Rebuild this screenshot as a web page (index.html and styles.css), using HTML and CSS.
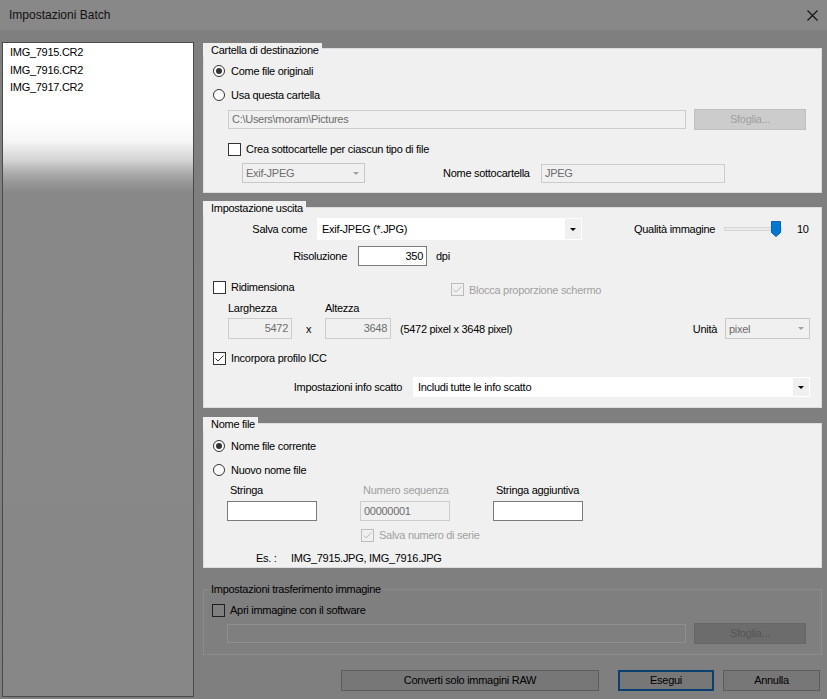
FILE: index.html
```html
<!DOCTYPE html>
<html lang="it">
<head>
<meta charset="utf-8">
<title>Impostazioni Batch</title>
<link rel="stylesheet" href="styles.css">
</head>
<body>
<header class="titlebar">
  <span class="title">Impostazioni Batch</span>
  <svg class="close" width="11" height="11" viewBox="0 0 11 11"><path d="M0.5 0.5 L10.5 10.5 M10.5 0.5 L0.5 10.5" stroke="#111" stroke-width="1.1" fill="none"/></svg>
</header>
<div class="main">
  <div class="filelist">
    <div class="item">IMG_7915.CR2</div>
    <div class="item">IMG_7916.CR2</div>
    <div class="item">IMG_7917.CR2</div>
  </div>
  <div class="settings">
    <section class="group g1">
      <div class="legend">Cartella di destinazione</div>
      <div class="box">
        <div class="row opt first"><span class="radio on"></span><span class="rlbl">Come file originali</span></div>
        <div class="row opt"><span class="radio"></span><span class="rlbl">Usa questa cartella</span></div>
        <div class="row path">
          <div class="input dis path-input">C:\Users\moram\Pictures</div>
          <div class="btn dis browse">Sfoglia...</div>
        </div>
        <div class="row sub"><span class="check"></span><span class="clbl">Crea sottocartelle per ciascun tipo di file</span></div>
        <div class="row fmt">
          <div class="combo dis fmt-combo"><span class="txt">Exif-JPEG</span><span class="abox"><span class="arrow"></span></span></div>
          <span class="sublabel">Nome sottocartella</span>
          <div class="input dis sub-input">JPEG</div>
        </div>
      </div>
    </section>

    <section class="group g2">
      <div class="legend">Impostazione uscita</div>
      <div class="box">
        <div class="row ra">
          <span class="lab-right w104">Salva come</span>
          <div class="combo save-combo"><span class="txt">Exif-JPEG (*.JPG)</span><span class="abox"><span class="arrow"></span></span></div>
          <span class="qlabel">Qualità immagine</span>
          <div class="slider"><svg width="10" height="16" viewBox="0 0 10 16"><path d="M0.5 0.5 H9.5 V11.5 L5 15.5 L0.5 11.5 Z" fill="#0078d7" stroke="#0065b8" stroke-width="1"/></svg></div>
          <span class="qval">10</span>
        </div>
        <div class="row rb">
          <span class="lab-right w144">Risoluzione</span>
          <div class="input num res-input">350</div>
          <span class="unit">dpi</span>
        </div>
        <div class="row rc">
          <div class="resize-cell"><span class="check"></span><span class="clbl">Ridimensiona</span></div>
          <div class="lock-cell"><span class="check dis"><svg width="11" height="11" viewBox="0 0 11 11"><path d="M1.5 5.5 L4 8 L9.5 2.5" fill="none" stroke="#bcbcbc" stroke-width="1"/></svg></span><span class="clbl gray">Blocca proporzione schermo</span></div>
        </div>
        <div class="row rd">
          <span class="wlabel">Larghezza</span>
          <span>Altezza</span>
        </div>
        <div class="row re">
          <div class="input dis num w-input">5472</div>
          <span class="times">x</span>
          <div class="input dis num h-input">3648</div>
          <span class="dims">(5472 pixel x 3648 pixel)</span>
          <span class="spacer"></span>
          <span>Unità</span>
          <div class="combo dis unit-combo"><span class="txt">pixel</span><span class="abox"><span class="arrow"></span></span></div>
        </div>
        <div class="row rf"><span class="check"><svg width="11" height="11" viewBox="0 0 11 11"><path d="M1.5 5.5 L4 8 L9.5 2.5" fill="none" stroke="#333" stroke-width="1"/></svg></span><span class="clbl">Incorpora profilo ICC</span></div>
        <div class="row rg">
          <span class="lab-right w199">Impostazioni info scatto</span>
          <div class="combo info-combo"><span class="txt">Includi tutte le info scatto</span><span class="abox"><span class="arrow"></span></span></div>
        </div>
      </div>
    </section>

    <section class="group g3">
      <div class="legend">Nome file</div>
      <div class="box">
        <div class="row opt first"><span class="radio on"></span><span class="rlbl">Nome file corrente</span></div>
        <div class="row opt"><span class="radio"></span><span class="rlbl">Nuovo nome file</span></div>
        <div class="row name-labels">
          <span class="ncol">Stringa</span>
          <span class="ncol gray">Numero sequenza</span>
          <span class="ncol">Stringa aggiuntiva</span>
        </div>
        <div class="row name-inputs">
          <div class="ncell"><div class="input name-input"></div></div>
          <div class="ncell"><div class="input dis name-input">00000001</div></div>
          <div class="ncell"><div class="input name-input"></div></div>
        </div>
        <div class="row serial"><span class="check dis"><svg width="11" height="11" viewBox="0 0 11 11"><path d="M1.5 5.5 L4 8 L9.5 2.5" fill="none" stroke="#bcbcbc" stroke-width="1"/></svg></span><span class="clbl gray">Salva numero di serie</span></div>
        <div class="row example"><span class="es">Es. :</span><span>IMG_7915.JPG, IMG_7916.JPG</span></div>
      </div>
    </section>

    <section class="group g4">
      <div class="legend">Impostazioni trasferimento immagine</div>
      <div class="box">
        <div class="row open"><span class="check dim"></span><span class="clbl">Apri immagine con il software</span></div>
        <div class="row path2">
          <div class="input dim-input soft-input"></div>
          <div class="btn dim-dis browse">Sfoglia...</div>
        </div>
      </div>
    </section>

    <div class="actions">
      <div class="btn dimbtn raw">Converti solo immagini RAW</div>
      <div class="btn dimbtn ok">Esegui</div>
      <div class="btn dimbtn cancel">Annulla</div>
    </div>
  </div>
</div>
</body>
</html>
```

FILE: styles.css
```css
* { box-sizing: border-box; }
html, body { margin: 0; padding: 0; }
body {
  width: 827px;
  height: 699px;
  overflow: hidden;
  background: #7f7f7f;
  font-family: "Liberation Sans", Arial, sans-serif;
  font-size: 11px;
  letter-spacing: -0.28px;
  color: #000;
}

.titlebar {
  height: 30px;
  background: #888888;
  display: flex;
  align-items: center;
  justify-content: space-between;
  padding: 0 9px;
}
.title { font-size: 12px; letter-spacing: 0; color: #111; }

.main { display: flex; align-items: flex-start; }

.filelist {
  margin: 12px 0 0 2px;
  width: 192px;
  height: 655px;
  border: 1px solid #4a4a4a;
  padding: 1px 0 0 7px;
  background: linear-gradient(to bottom,
    #ffffff 0px, #ffffff 75px, #f6f6f6 98px, #d2d2d2 118px,
    #b2b2b2 128px, #9a9a9a 138px, #888888 150px, #878787 100%);
}
.item { line-height: 17.5px; height: 17.5px; }

.settings { margin: 13px 0 0 9px; width: 619px; }

.group .legend {
  position: relative;
  z-index: 1;
  width: fit-content;
  height: 14px;
  line-height: 14px;
  padding: 0 3px 0 8px;
  background: #f0f0f0;
}
.group .box {
  background: #f0f0f0;
  box-shadow: inset 0 0 0 1px #dcdcdc;
  overflow: hidden;
}

.g1 .legend { margin-bottom: -9px; }
.g1 .box { height: 145px; }
.g2 { margin-top: 8px; }
.g2 .legend { margin-bottom: -8px; }
.g2 .box { height: 201px; }
.g3 { margin-top: 9px; }
.g3 .legend { margin-bottom: -8px; }
.g3 .box { height: 145px; }
.g4 { margin-top: 14px; }
.g4 .legend { margin-bottom: -7px; margin-left: 6px; padding: 0 2px; background: #7f7f7f; }
.g4 .box { height: 66px; background: transparent; box-shadow: inset 0 0 0 1px #8c8c8c; }

.row { display: flex; align-items: center; }

/* radio / checkbox */
.radio {
  width: 12px; height: 12px;
  border: 1px solid #333;
  border-radius: 50%;
  background: #fff;
  display: flex; align-items: center; justify-content: center;
  flex: none;
}
.radio.on::after {
  content: "";
  width: 6px; height: 6px;
  border-radius: 50%;
  background: #333;
}
.rlbl { margin-left: 6px; }
.check {
  width: 13px; height: 13px;
  border: 1px solid #333;
  background: #fff;
  flex: none;
  display: flex;
}
.check.dis { border-color: #bcbcbc; background: #f0f0f0; }
.check.dim { border-color: #1e1e1e; background: #7f7f7f; }
.clbl { margin-left: 5px; }
.gray { color: #a0a0a0; }

/* inputs */
.input {
  height: 20px;
  border: 1px solid #7a7a7a;
  background: #fff;
  padding: 0 3px;
  line-height: 18px;
  white-space: nowrap;
  overflow: hidden;
}
.input.dis { border-color: #cccccc; background: #f0f0f0; color: #6d6d6d; }
.input.num { text-align: right; }
.dim-input { border-color: #8e8e8e; background: #7f7f7f; }

.btn {
  border: 1px solid #adadad;
  background: #e1e1e1;
  text-align: center;
  white-space: nowrap;
}
.btn.dis { background: #cccccc; border-color: #bfbfbf; color: #a0a0a0; }
.btn.dim-dis { background: #6c6c6c; border-color: #666; color: #555; }

.combo { display: flex; align-items: stretch; background: #fff; white-space: nowrap; }
.combo .txt { flex: 1; display: flex; align-items: center; padding-left: 5px; overflow: hidden; }
.combo .abox {
  width: 16px;
  margin: 1px;
  background: #f0f0f0;
  display: flex; align-items: center; justify-content: center;
}
.arrow {
  width: 0; height: 0;
  border-left: 3px solid transparent;
  border-right: 3px solid transparent;
  border-top: 3px solid #000;
}
.combo.dis { background: #f0f0f0; border: 1px solid #c8c8c8; color: #6d6d6d; }
.combo.dis .txt { padding-left: 3px; }
.combo.dis .abox { background: transparent; margin: 0; }
.combo.dis .arrow { border-top-color: #a0a0a0; }

/* group 1 */
.opt { height: 16px; padding-left: 10px; margin-top: 8px; }
.opt.first { margin-top: 15px; }
.path { margin-top: 6px; height: 21px; padding-left: 25px; align-items: flex-start; }
.path-input { width: 458px; height: 19px; margin-top: 1px; line-height: 17px; }
.browse { margin-left: 8px; width: 112px; height: 21px; line-height: 19px; }
.sub { margin-top: 11px; height: 16px; padding-left: 25px; }
.fmt { margin-top: 6px; height: 20px; padding-left: 39px; }
.fmt-combo { width: 123px; height: 20px; }
.sublabel { margin-left: 78px; width: 98px; }
.sub-input { width: 184px; height: 19px; line-height: 17px; }

/* group 2 */
.lab-right { text-align: right; flex: none; }
.w104 { width: 104px; }
.w144 { width: 144px; }
.w199 { width: 199px; }
.ra { margin-top: 11px; height: 22px; }
.save-combo { margin-left: 10px; width: 265px; height: 22px; }
.qlabel { margin-left: 52px; width: 90px; }
.slider {
  width: 58px; height: 16px;
  display: flex; justify-content: flex-end; padding-right: 1px;
  background:
    linear-gradient(#e7eaea, #e7eaea) 1px 50% / calc(100% - 2px) 2px no-repeat,
    linear-gradient(#d6d6d6, #d6d6d6) 0 50% / 100% 4px no-repeat;
}
.qval { margin-left: 15px; }
.rb { margin-top: 6px; height: 20px; }
.res-input { margin-left: 11px; width: 69px; }
.unit { margin-left: 9px; }
.rc { margin-top: 13px; height: 16px; padding-left: 10px; }
.resize-cell { width: 238px; display: flex; align-items: center; }
.lock-cell { display: flex; align-items: center; padding-top: 5px; }
.rd { margin-top: 6px; height: 14px; padding-left: 25px; }
.wlabel { width: 97px; }
.re { margin-top: 3px; height: 21px; padding-left: 25px; }
.w-input { width: 64px; height: 21px; line-height: 19px; }
.h-input { width: 66px; height: 21px; line-height: 19px; }
.times { width: 33px; padding-left: 14px; }
.dims { margin-left: 9px; }
.spacer { flex: 1; }
.unit-combo { width: 85px; height: 21px; margin-left: 8px; margin-right: 12px; }
.rf { margin-top: 11px; height: 16px; padding-left: 10px; }
.rg { margin-top: 11px; height: 20px; }
.info-combo { flex: 1; height: 20px; margin-left: 11px; margin-right: 12px; }

/* group 3 */
.name-labels { margin-top: 5px; height: 14px; padding-left: 24px; }
.ncol { width: 133px; padding-left: 3px; }
.name-inputs { margin-top: 4px; height: 20px; padding-left: 24px; }
.ncell { width: 133px; }
.name-input { width: 90px; }
.serial { margin-top: 6px; height: 16px; padding-left: 158px; }
.example { margin-top: 8px; height: 14px; padding-left: 53px; }
.es { width: 35px; }

/* group 4 */
.open { margin-top: 13px; height: 16px; padding-left: 9px; }
.path2 { margin-top: 5px; height: 21px; padding-left: 24px; align-items: flex-start; }
.soft-input { width: 459px; height: 19px; margin-top: 1px; }

/* bottom buttons */
.actions { display: flex; margin-top: 15px; padding-left: 138px; }
.dimbtn {
  height: 21px;
  line-height: 19px;
  background: #777777;
  border-color: #5c5c5c;
}
.raw { width: 258px; }
.ok { width: 96px; margin-left: 19px; border: 2px solid #0b3f70; line-height: 17px; }
.cancel { width: 97px; margin-left: 9px; }
```
